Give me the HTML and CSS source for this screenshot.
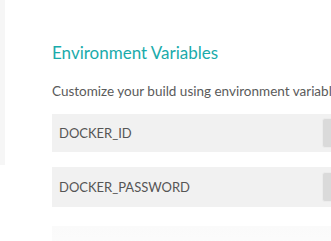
FILE: index.html
```html
<!DOCTYPE html>
<html lang="en">
<head>
  <meta charset="UTF-8" />
  <meta name="viewport" content="width=device-width, initial-scale=1" />
  <title>Environment Variables</title>
  <link rel="stylesheet" href="styles.css">
</head>
<body>

<div class="page">
  <div class="rail"></div>
  <div class="panel">
    <h2>Environment Variables</h2>
    <p class="lead">Customize your build using environment variables.</p>

    <div class="env-list">
      <div class="env-row">
        <span class="env-name">DOCKER_ID</span>
        <button class="env-value"></button>
      </div>
      <div class="env-row">
        <span class="env-name">DOCKER_PASSWORD</span>
        <button class="env-value"></button>
      </div>
      <div class="env-row faded"></div>
    </div>
  </div>
</div>

</body>
</html>
```

FILE: styles.css
```css
body {
  margin: 0;
  font-family: 'Lato', 'Open Sans', sans-serif;
  background: white;
  overflow: hidden;
}

.page {
  display: flex;
  align-items: flex-start;
  width: 460px;
}

.rail {
  width: 5px;
  height: 165px;
  background: #f6f6f6;
  flex-shrink: 0;
}

.panel {
  padding: 42px 0 0 47px;
  flex: 1;
}

h2 {
  margin: 0;
  font-size: 17px;
  font-weight: 400;
  color: #1aabab;
  line-height: 22px;
}

.lead {
  margin: 18px 0 0;
  font-size: 13.5px;
  color: #5a5a5a;
  white-space: nowrap;
  line-height: 18px;
}

.env-list {
  margin-top: 14px;
  display: flex;
  flex-direction: column;
  gap: 15px;
  width: 330px;
}

.env-row {
  height: 38px;
  background: #f1f1f1;
  display: flex;
  align-items: center;
  padding-left: 7px;
}

.env-row + .env-row {
  height: 40px;
}

.env-name {
  flex: 1;
  font-size: 13px;
  color: #555;
}

.env-value {
  width: 50px;
  height: 30px;
  margin-right: 10px;
  border: 1px solid #ececec;
  border-radius: 3px;
  background: #dadada;
}

.env-row.faded {
  margin-top: 4px;
  background: linear-gradient(#fafafa, #fdfdfd);
}
```
